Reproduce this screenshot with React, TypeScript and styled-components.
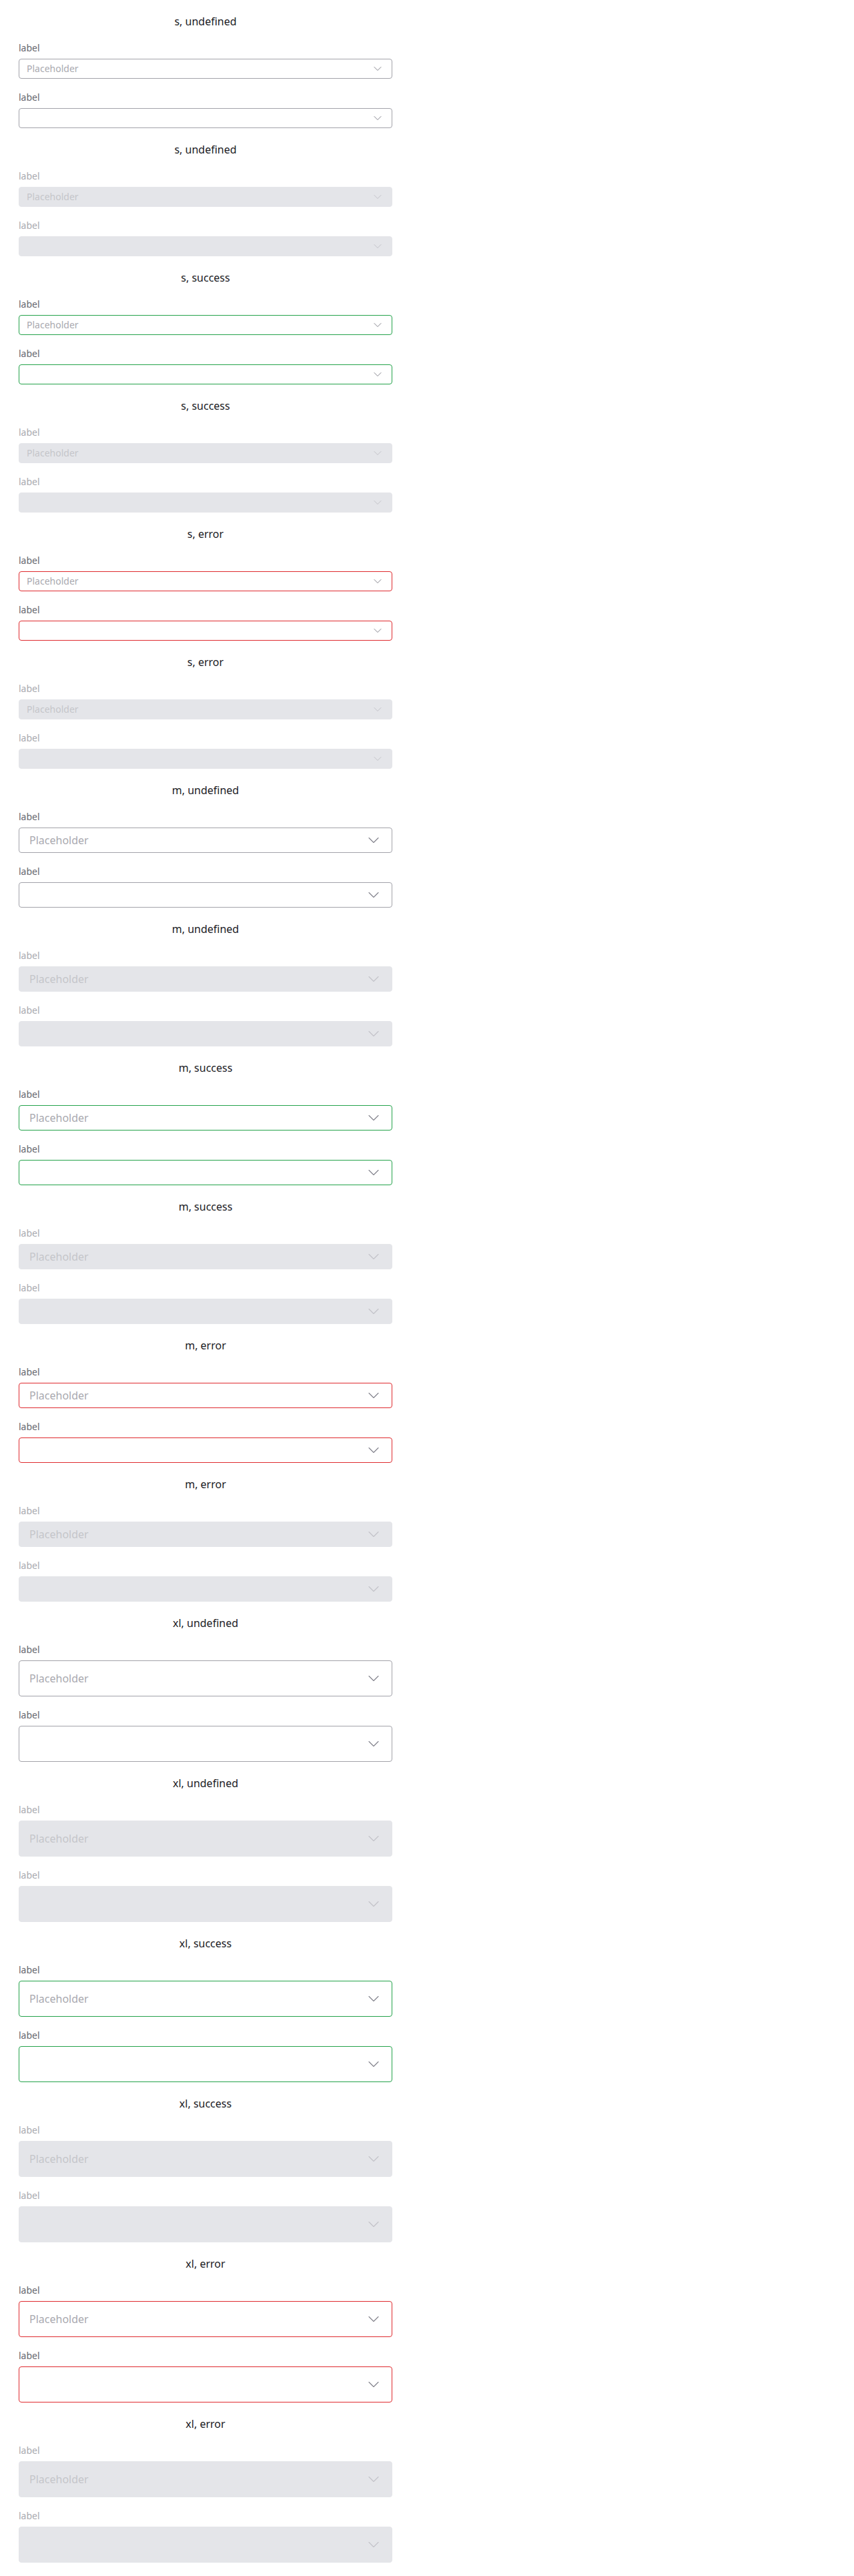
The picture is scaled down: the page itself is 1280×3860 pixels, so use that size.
import styled, { createGlobalStyle, css } from 'styled-components';

type Size = 's' | 'm' | 'xl';
type Status = 'undefined' | 'success' | 'error';

const GlobalStyle = createGlobalStyle`
  html, body {
    margin: 0;
    padding: 0;
    background: #ffffff;
    font-family: "Noto Sans", "Open Sans", sans-serif;
  }
`;

const sizes: Size[] = ['s', 'm', 'xl'];
const statuses: Status[] = ['undefined', 'success', 'error'];

const heights = { s: 30, m: 38, xl: 54 };

const borderColor = (status: Status) =>
  status === 'success' ? '#23a24a' : status === 'error' ? '#df2a2e' : '#a2a2a9';

const Chevron = ({ size, disabled }: { size: Size; disabled: boolean }) => {
  const px = size === 's' ? 20 : 28;
  return (
    <ChevronIcon width={px} height={px} viewBox="0 0 24 24" fill="none">
      <path
        d="M6 9l6 6 6-6"
        stroke={disabled ? '#c3c3c9' : '#85858e'}
        strokeWidth={size === 's' ? 1.2 : 1}
        strokeLinecap="round"
        strokeLinejoin="round"
      />
    </ChevronIcon>
  );
};

const Field = ({
  size,
  status,
  disabled,
  placeholder,
}: {
  size: Size;
  status: Status;
  disabled: boolean;
  placeholder?: string;
}) => (
  <FieldWrapper>
    <Label $disabled={disabled}>label</Label>
    <SelectBox $size={size} $status={status} $disabled={disabled}>
      <Value $size={size} $disabled={disabled}>{placeholder}</Value>
      <Chevron size={size} disabled={disabled} />
    </SelectBox>
  </FieldWrapper>
);

const App = () => {
  const groups: { size: Size; status: Status; disabled: boolean }[] = [];
  sizes.forEach((size) =>
    statuses.forEach((status) =>
      [false, true].forEach((disabled) => groups.push({ size, status, disabled }))
    )
  );

  return (
    <>
      <GlobalStyle />
      <Page>
        {groups.map((g, i) => (
          <Section key={i}>
            <Title>
              {g.size}, {g.status}
            </Title>
            <Field size={g.size} status={g.status} disabled={g.disabled} placeholder="Placeholder" />
            <Field size={g.size} status={g.status} disabled={g.disabled} />
          </Section>
        ))}
      </Page>
    </>
  );
};

const Page = styled.div`
  width: 560px;
  padding: 20px 28px;
  display: flex;
  flex-direction: column;
  gap: 20px;
`;

const Section = styled.section`
  display: flex;
  flex-direction: column;
  gap: 20px;
`;

const Title = styled.h3`
  margin: 0;
  text-align: center;
  font-size: 16px;
  line-height: 24px;
  font-weight: 400;
  color: #1b1b1f;
`;

const FieldWrapper = styled.div`
  display: flex;
  flex-direction: column;
  gap: 8px;
`;

const Label = styled.label<{ $disabled: boolean }>`
  font-size: 14px;
  line-height: 16px;
  color: ${({ $disabled }) => ($disabled ? '#a9a9af' : '#66666e')};
`;

const SelectBox = styled.div<{ $size: Size; $status: Status; $disabled: boolean }>`
  box-sizing: border-box;
  height: ${({ $size }) => heights[$size]}px;
  display: flex;
  align-items: center;
  justify-content: space-between;
  border-radius: 4px;
  padding: ${({ $size }) => ($size === 's' ? '0 11px 0 11px' : '0 13px 0 15px')};
  ${({ $disabled, $status }) =>
    $disabled
      ? css`
          background: #e4e5e9;
          border: 1px solid #e4e5e9;
        `
      : css`
          background: #ffffff;
          border: 1px solid ${borderColor($status)};
        `}
`;

const Value = styled.span<{ $size: Size; $disabled: boolean }>`
  font-size: ${({ $size }) => ($size === 's' ? 14 : 16)}px;
  line-height: 20px;
  color: ${({ $disabled }) => ($disabled ? '#c4c5ca' : '#a9a9af')};
`;

const ChevronIcon = styled.svg`
  flex-shrink: 0;
  display: block;
`;

export default App;
